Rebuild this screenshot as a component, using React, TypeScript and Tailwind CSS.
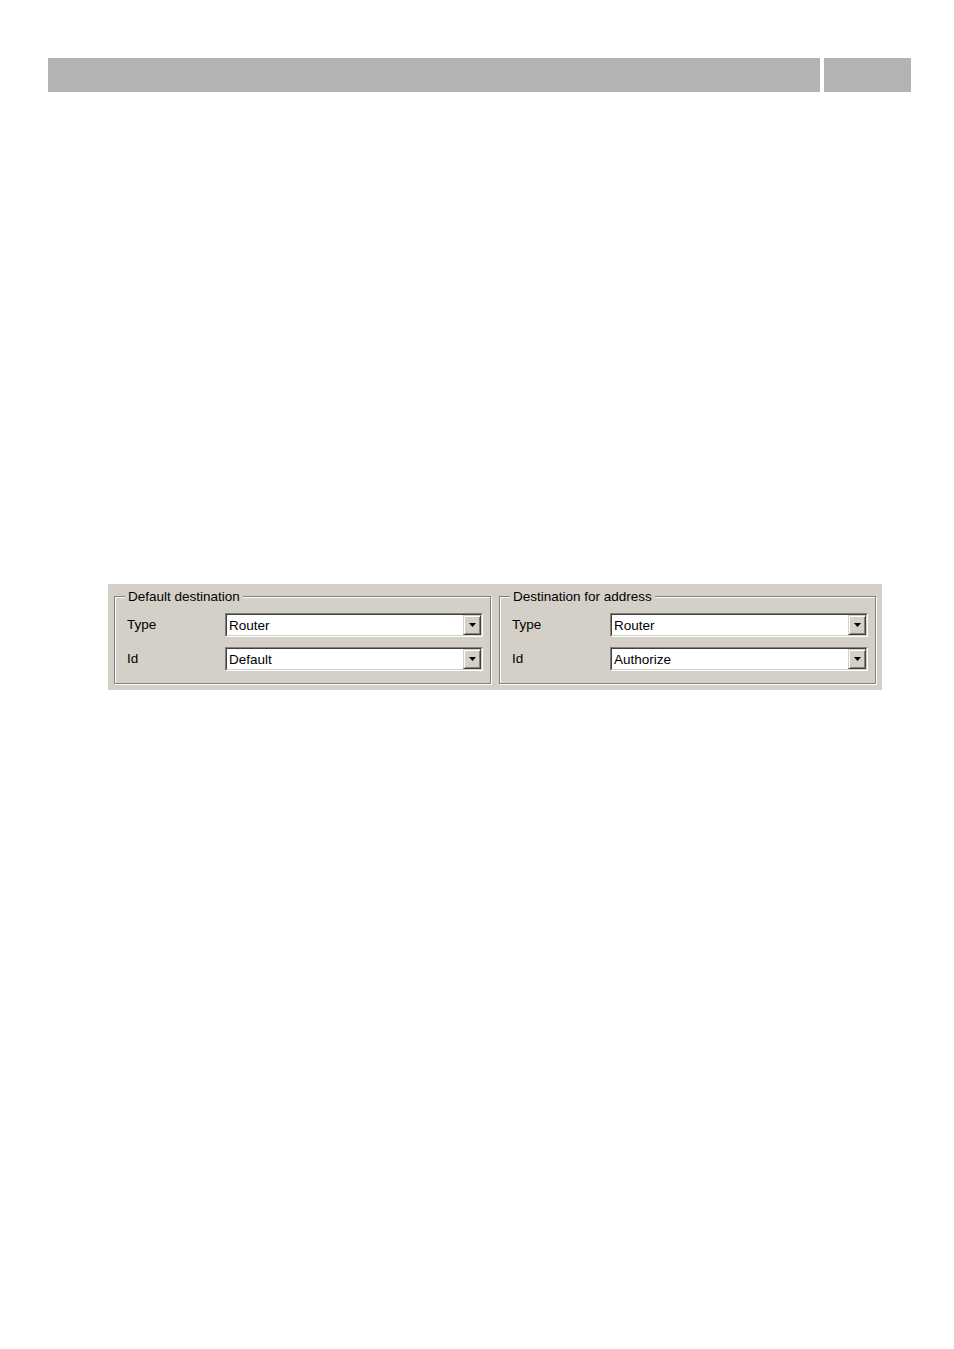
import { ReactNode } from 'react'

const font = { fontFamily: '"Liberation Sans", Arial, sans-serif' }

function Combo({ value }: { value: string }) {
  return (
    <div className="flex h-[24px] flex-1 border border-t-[#808080] border-l-[#808080] border-b-white border-r-white">
      <div className="flex flex-1 border border-t-[#404040] border-l-[#404040] border-b-[#d4d0c8] border-r-[#d4d0c8] bg-white">
        <span className="flex-1 pl-[2px] pt-[1px] text-[13.5px] leading-[20px] text-black">{value}</span>
        <div className="flex w-[18px] items-center justify-center border border-t-[#d4d0c8] border-l-[#d4d0c8] border-b-[#404040] border-r-[#404040] bg-[#d4d0c8] shadow-[inset_1px_1px_0_#fff,inset_-1px_-1px_0_#808080]">
          <svg width="7" height="4" viewBox="0 0 7 4">
            <path d="M0 0h7L3.5 4z" fill="#000" />
          </svg>
        </div>
      </div>
    </div>
  )
}

function Row({ label, value }: { label: string; value: string }) {
  return (
    <div className="flex items-center">
      <span className="w-[98px] pt-[1px] text-[13.5px] text-black">{label}</span>
      <Combo value={value} />
    </div>
  )
}

function Group({ title, children }: { title: string; children: ReactNode }) {
  return (
    <div className="relative flex-1 border border-[#808080] shadow-[inset_1px_1px_0_#fff,1px_1px_0_#fff]">
      <span className="absolute -top-[8px] left-[10px] bg-[#d4d0c8] px-[3px] text-[13.5px] leading-[16px] text-black">
        {title}
      </span>
      <div className="flex flex-col gap-[10px] pt-[16px] pb-[12px] pl-[12px] pr-[7px]">{children}</div>
    </div>
  )
}

export default function App() {
  return (
    <div className="min-h-[1349px] bg-white" style={font}>
      <div className="ml-[48px] flex gap-[4px] pt-[58px]">
        <div className="h-[34px] w-[772px] bg-[#b3b3b3]" />
        <div className="h-[34px] w-[87px] bg-[#b3b3b3]" />
      </div>
      <div className="ml-[108px] mt-[492px] flex h-[106px] w-[774px] gap-[8px] bg-[#d4d0c8] pl-[6px] pr-[6px] pt-[12px] pb-[6px]">
        <Group title="Default destination">
          <Row label="Type" value="Router" />
          <Row label="Id" value="Default" />
        </Group>
        <Group title="Destination for address">
          <Row label="Type" value="Router" />
          <Row label="Id" value="Authorize" />
        </Group>
      </div>
    </div>
  )
}
